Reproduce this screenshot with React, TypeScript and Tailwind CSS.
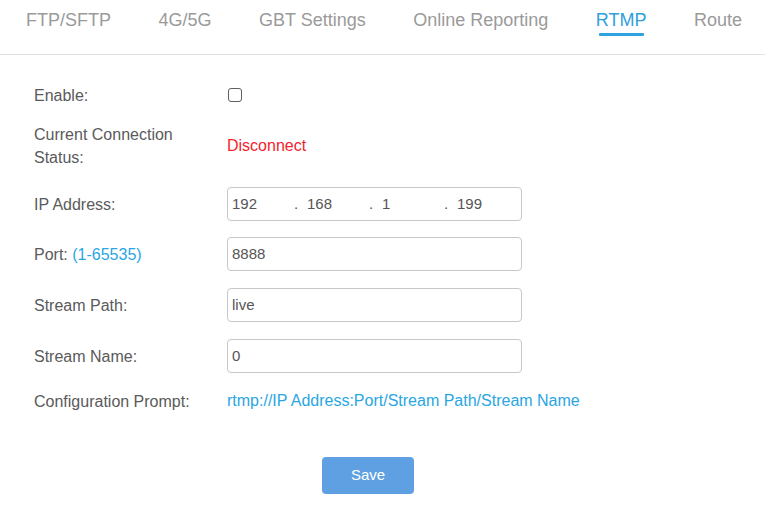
import React from "react";

const tabs = ["FTP/SFTP", "4G/5G", "GBT Settings", "Online Reporting", "RTMP", "Route"];

function Label({ children, narrow }: { children: React.ReactNode; narrow?: boolean }) {
  return (
    <div className="w-[193px] shrink-0 text-[16px] leading-[23px] text-[#5a5a5a] whitespace-nowrap">
      <div className={narrow ? "w-[150px] whitespace-normal" : ""}>{children}</div>
    </div>
  );
}

function TextBox({ value }: { value: string }) {
  return (
    <div className="w-[295px] h-[34px] shrink-0 rounded-[4px] border border-[#c8c8c8] bg-white flex items-center pl-[4px] text-[15px] text-[#555]">
      {value}
    </div>
  );
}

export default function App() {
  const ip = ["192", "168", "1", "199"];
  return (
    <div className="w-[773px] h-[509px] bg-white overflow-hidden" style={{ fontFamily: '"Liberation Sans", Arial, sans-serif' }}>
      <div className="w-[765px] h-[55px] border-b border-[#e2e2e2] flex items-start pl-[26px] gap-[47.5px] pt-[10px]">
        {tabs.map((t) => {
          const active = t === "RTMP";
          return (
            <div key={t} className="flex flex-col">
              <span className={`text-[18px] leading-[21px] whitespace-nowrap ${active ? "text-[#2f9fdc]" : "text-[#9a9a9a]"}`}>{t}</span>
              {active && <div className="mt-[2px] mx-[3px] h-[3px] bg-[#2ea2de] rounded-[1px]" />}
            </div>
          );
        })}
      </div>

      <div className="pl-[34px] pt-[23px] flex flex-col">
        <div className="flex items-center h-[34px]">
          <Label>Enable:</Label>
          <div className="ml-[1px] w-[14px] h-[14px] rounded-[3px] border border-[#5f5f5f] bg-white" />
        </div>

        <div className="flex items-center h-[46px] mt-[11px]">
          <Label narrow>Current Connection Status:</Label>
          <div className="text-[16px] text-[#f5222d]">Disconnect</div>
        </div>

        <div className="flex items-center h-[34px] mt-[18px]">
          <Label>IP Address:</Label>
          <div className="w-[295px] h-[34px] shrink-0 rounded-[4px] border border-[#c8c8c8] bg-white flex items-center pl-[4px] text-[15px] text-[#555]">
            {ip.map((n, i) => (
              <React.Fragment key={i}>
                <span className="w-[62px]">{n}</span>
                {i < 3 && <span className="w-[13px]">.</span>}
              </React.Fragment>
            ))}
          </div>
        </div>

        <div className="flex items-center h-[34px] mt-[16px]">
          <Label>
            Port: <span className="text-[#2aa6e2]">(1-65535)</span>
          </Label>
          <TextBox value="8888" />
        </div>

        <div className="flex items-center h-[34px] mt-[17px]">
          <Label>Stream Path:</Label>
          <TextBox value="live" />
        </div>

        <div className="flex items-center h-[34px] mt-[17px]">
          <Label>Stream Name:</Label>
          <TextBox value="0" />
        </div>

        <div className="flex items-center h-[34px] mt-[11px]">
          <Label>Configuration Prompt:</Label>
          <div className="text-[16px] text-[#2aa6e2] whitespace-nowrap">rtmp://IP Address:Port/Stream Path/Stream Name</div>
        </div>
      </div>

      <div className="w-[736px] flex justify-center mt-[39px]">
        <button className="w-[92px] h-[37px] rounded-[4px] bg-[#5fa0e2] text-white text-[15px]">Save</button>
      </div>
    </div>
  );
}
